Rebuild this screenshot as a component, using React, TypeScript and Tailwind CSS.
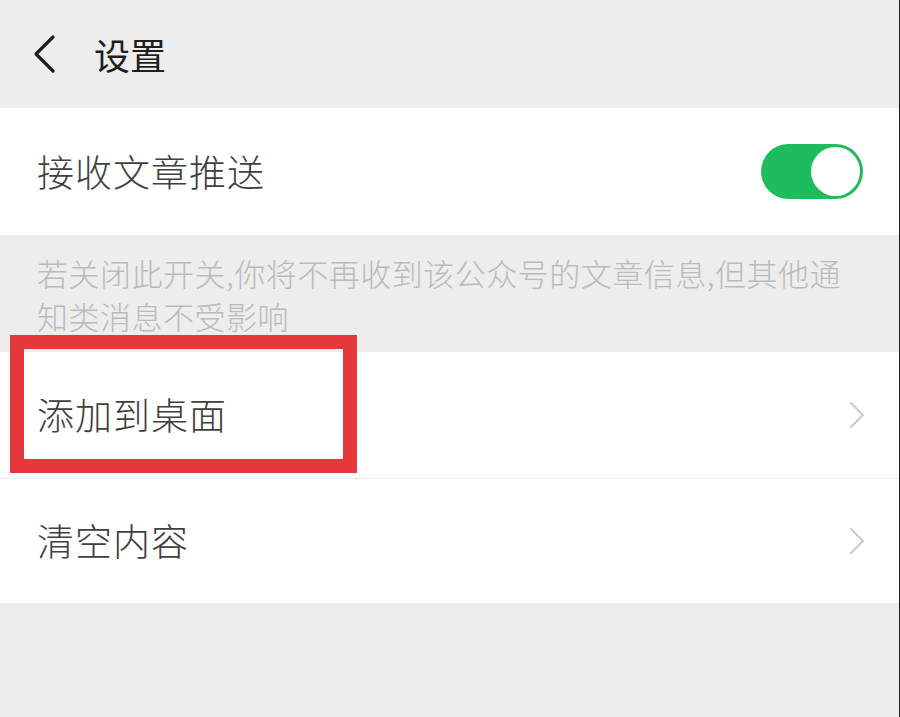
import React from 'react';

const font = { fontFamily: '"Noto Sans CJK SC", "Noto Sans", sans-serif' };

const Chevron = () => (
  <svg width="18" height="28" viewBox="0 0 18 28" fill="none" className="mr-[33px]">
    <path d="M3 2l12 12L3 26" stroke="#cbcbcb" strokeWidth="2.2" strokeLinecap="round" strokeLinejoin="round" />
  </svg>
);

const Toggle = () => (
  <div className="w-[102px] h-[55px] rounded-full bg-[#1fbc5e] flex items-center justify-end pr-[3px]">
    <div className="w-[49px] h-[49px] rounded-full bg-white" />
  </div>
);

export default function App() {
  return (
    <div className="relative w-full h-[717px] bg-[#ededed] border-r border-[#222] overflow-hidden" style={font}>
      {/* Header */}
      <div className="h-[108px] flex items-center">
        <svg width="26" height="40" viewBox="0 0 26 40" fill="none" className="ml-[31px]">
          <path d="M22 3L5 20l17 17" stroke="#1c1c1c" strokeWidth="3.2" strokeLinecap="round" strokeLinejoin="round" />
        </svg>
        <span className="ml-[37px] text-[36px] leading-none text-[#1e1e1e]">设置</span>
      </div>

      {/* Article push */}
      <div className="h-[127px] bg-white flex items-center justify-between pl-[37px] pr-[36px]">
        <span className="text-[37px] font-extralight text-[#404040] tracking-[1px]">接收文章推送</span>
        <Toggle />
      </div>

      {/* Description */}
      <div className="h-[117px] pt-[16px] pl-[37px] text-[31px] leading-[43px] tracking-[0.5px] font-extralight text-[#bbbbbb]">
        若关闭此开关,你将不再收到该公众号的文章信息,但其他通
        <br />
        知类消息不受影响
      </div>

      {/* List */}
      <div className="bg-white">
        <div className="h-[127px] flex items-center justify-between pl-[37px] border-b border-[#ececec]">
          <span className="text-[37px] font-extralight text-[#404040] tracking-[1px]">添加到桌面</span>
          <Chevron />
        </div>
        <div className="h-[124px] flex items-center justify-between pl-[37px]">
          <span className="text-[37px] font-extralight text-[#404040] tracking-[1px]">清空内容</span>
          <Chevron />
        </div>
      </div>

      {/* Red highlight annotation */}
      <div className="absolute left-[10px] top-[335px] w-[347px] h-[138px] border-[14px] border-[#e6373b]" />
    </div>
  );
}
